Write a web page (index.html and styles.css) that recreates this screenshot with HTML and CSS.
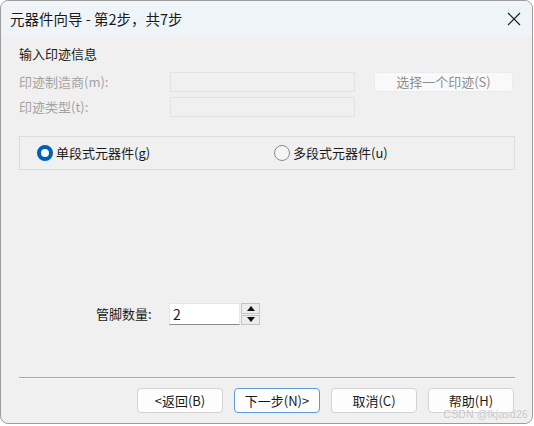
FILE: index.html
```html
<!DOCTYPE html>
<html lang="zh-CN">
<head>
<meta charset="utf-8">
<title>元器件向导</title>
<link rel="stylesheet" href="styles.css">
</head>
<body>
<div class="window">
  <div class="titlebar">
    <span class="title">元器件向导 - 第2步，共7步</span>
    <svg class="close" width="14" height="14" viewBox="0 0 14 14"><path d="M1 1 L13 13 M13 1 L1 13" stroke="#1c1c1c" stroke-width="1.1" fill="none"/></svg>
  </div>
  <div class="body">
    <div class="section-title">输入印迹信息</div>
    <div class="fp-grid">
      <span class="dis-label">印迹制造商(m):</span>
      <span class="dis-input"></span>
      <span class="dis-button">选择一个印迹(S)</span>
      <span class="dis-label">印迹类型(t):</span>
      <span class="dis-input"></span>
    </div>
    <div class="group">
      <label class="radio-item item-a"><span class="radio on"></span><span>单段式元器件(g)</span></label>
      <label class="radio-item"><span class="radio"></span><span>多段式元器件(u)</span></label>
    </div>
    <div class="pins">
      <span class="pins-label">管脚数量:</span>
      <span class="num-input">2</span>
      <span class="spinner">
        <span class="spin-btn"><svg width="8" height="5" viewBox="0 0 8 5"><path d="M4 0 L8 5 L0 5 Z" fill="#111"/></svg></span>
        <span class="spin-btn"><svg width="8" height="5" viewBox="0 0 8 5"><path d="M0 0 L8 0 L4 5 Z" fill="#111"/></svg></span>
      </span>
    </div>
    <div class="separator"></div>
    <div class="buttons">
      <span class="btn"><span class="btn-text">&lt;返回(B)</span></span>
      <span class="btn default"><span class="btn-text">下一步(N)&gt;</span></span>
      <span class="btn"><span class="btn-text">取消(C)</span></span>
      <span class="btn"><span class="btn-text">帮助(H)</span></span>
    </div>
  </div>
  <div class="watermark">CSDN @lkjasd26</div>
</div>
</body>
</html>
```

FILE: styles.css
```css
* { box-sizing: border-box; }
html, body { margin: 0; padding: 0; background: #ffffff; }
body {
  width: 534px;
  height: 426px;
  font-family: "Noto Sans CJK SC", "Noto Sans", sans-serif;
  font-size: 13px;
  color: #1a1a1a;
}
.window {
  position: relative;
  width: 533px;
  height: 424px;
  border: 1px solid #9c9c9c;
  border-radius: 8px;
  background: #f0f0f0;
  overflow: hidden;
  display: flex;
  flex-direction: column;
}
.titlebar {
  height: 35px;
  flex: none;
  background: #eff4f9;
  display: flex;
  align-items: center;
  justify-content: space-between;
  padding: 0 11px 0 9px;
}
.title {
  font-size: 14.5px;
  line-height: 20px;
  color: #1a1a1a;
}
.close { display: block; }
.body {
  padding: 0 17px 0 18px;
  display: flex;
  flex-direction: column;
}
.section-title {
  margin-top: 9px;
  line-height: 18px;
  height: 18px;
}
.fp-grid {
  margin-top: 9px;
  display: grid;
  grid-template-columns: 132px 185px 139px;
  column-gap: 19px;
  row-gap: 5px;
  grid-auto-rows: 20px;
  align-items: center;
}
.dis-label { color: #a3a3a3; line-height: 20px; white-space: nowrap; }
.dis-input {
  height: 20px;
  border: 1px solid #e2e2e2;
  background: #f0f0f0;
}
.dis-button {
  height: 20px;
  border: 1px solid #ececec;
  border-radius: 3px;
  background: #f9f9f9;
  color: #8e8e8e;
  text-align: center;
  line-height: 18px;
}
.group {
  margin-top: 19px;
  height: 34px;
  border: 1px solid #dcdcdc;
  display: flex;
  align-items: center;
  padding-left: 17px;
}
.radio-item { display: flex; align-items: center; gap: 3px; line-height: 18px; }
.item-a { width: 237px; }
.radio {
  width: 16px;
  height: 16px;
  border-radius: 50%;
  border: 1px solid #8a8a8a;
  background: #f5f5f5;
  flex: none;
}
.radio.on {
  border: 4.5px solid #005fb8;
  background: #ffffff;
}
.pins {
  margin-top: 133px;
  display: flex;
  align-items: center;
  height: 22px;
  padding-left: 77px;
}
.pins-label { width: 73px; line-height: 18px; }
.num-input {
  width: 71px;
  height: 22px;
  background: #ffffff;
  border: 1px solid #e6e6e6;
  border-bottom: 1px solid #8c8c8c;
  padding-left: 3px;
  line-height: 20px;
  font-size: 14px;
}
.spinner {
  margin-left: 1px;
  width: 19px;
  height: 22px;
  display: flex;
  flex-direction: column;
  gap: 1px;
}
.spin-btn {
  flex: 1;
  border: 1px solid #c4c4c4;
  background: #ececec;
  display: flex;
  align-items: center;
  justify-content: center;
}
.spin-btn svg { display: block; }
.separator {
  margin-top: 52px;
  background: #a8a8a8;
  border-bottom: 1px solid #fafafa;
  height: 2px;
}
.buttons {
  margin-top: 9px;
  display: flex;
  justify-content: flex-end;
  gap: 11px;
  padding-right: 1px;
}
.btn {
  width: 86px;
  height: 25px;
  border: 1px solid #d3d3d3;
  border-radius: 4px;
  background: #fdfdfd;
  display: flex;
  align-items: center;
  justify-content: center;
  color: #1a1a1a;
}
.btn-text { line-height: 16px; }
.btn.default {
  border: 1px solid #5b9bd9;
}
.watermark {
  position: absolute;
  right: 4px;
  bottom: 4px;
  font-family: "Liberation Sans", Arial, sans-serif;
  font-size: 10.5px;
  line-height: 10px;
  color: #c4c4c4;
  text-shadow: 0 0 1px #ffffff;
  letter-spacing: 0.2px;
}
```
